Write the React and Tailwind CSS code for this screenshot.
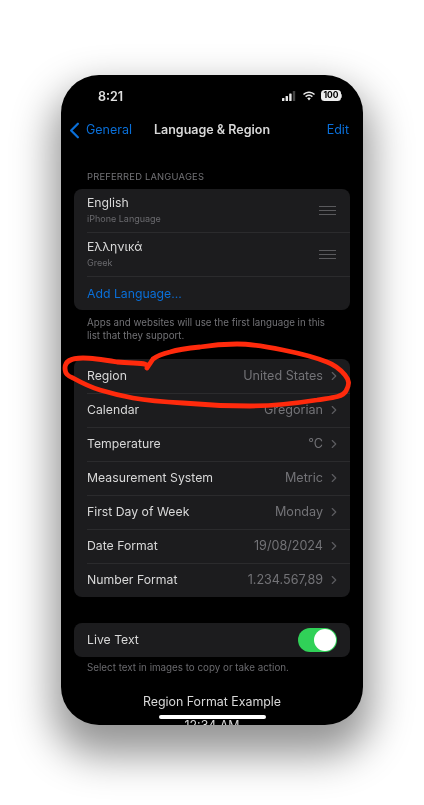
/**
 * App.jsx
 * iPhone settings screen: Language & Region, with a hand-drawn red circle on top.
 */
import { ChevronLeft, ChevronRight } from "lucide-react";

const formatRows = [
  ["Region", "United States"],
  ["Calendar", "Gregorian"],
  ["Temperature", "°C"],
  ["Measurement System", "Metric"],
  ["First Day of Week", "Monday"],
  ["Date Format", "19/08/2024"],
  ["Number Format", "1.234.567,89"],
];

const languages = [
  ["English", "iPhone Language"],
  ["Ελληνικά", "Greek"],
];

const StatusIcons = () => (
  <div className="flex items-center">
    {/* Signal */}
    <svg width="14" height="10" viewBox="0 0 14 10" className="mr-[6px] text-[#e8e8e8]">
      <rect x="0" y="7" width="2.4" height="3" rx="0.6" fill="currentColor" />
      <rect x="3.6" y="5" width="2.4" height="5" rx="0.6" fill="currentColor" />
      <rect x="7.2" y="2.5" width="2.4" height="7.5" rx="0.6" fill="currentColor" />
      <rect x="10.8" y="0" width="2.4" height="10" rx="0.6" fill="#444" />
    </svg>
    {/* Wifi */}
    <svg width="14" height="10" viewBox="0 0 14 10" fill="#e8e8e8" className="mr-[5px]">
      <path d="M7 2.100c1.900 0 3.700.7 5 2l1-1.100C11.400 1.300 9.300.4 7 .4S2.600 1.300 1 3l1 1.100c1.300-1.300 3.100-2 5-2z" />
      <path d="M7 5.100c1.100 0 2.100.4 2.900 1.100l1-1.100C9.800 4.100 8.500 3.500 7 3.500s-2.800.6-3.900 1.600l1 1.100C4.900 5.500 5.900 5.100 7 5.100z" />
      <path d="M7 6.600c-.7 0-1.300.3-1.800.7L7 9.600l1.800-2.300c-.5-.4-1.100-.7-1.800-.7z" />
    </svg>
    {/* Battery */}
    <div className="flex items-center">
      <div className="h-[11px] w-[20px] rounded-[3.5px] bg-[#eeeeee] text-center text-[8.500px] font-bold leading-[11px] text-black">
        100
      </div>
      <div className="h-[4px] w-[1px] rounded-r-sm bg-[#aaaaaa]" />
    </div>
  </div>
);

const DragHandle = () => (
  <div className="flex flex-col gap-[2.500px]">
    <div className="h-[1.500px] w-[17px] bg-[#5a5a5d]" />
    <div className="h-[1.500px] w-[17px] bg-[#5a5a5d]" />
    <div className="h-[1.500px] w-[17px] bg-[#5a5a5d]" />
  </div>
);

const App = () => {
  return (
    <div className="relative h-[805px] w-[424px] overflow-hidden bg-white pl-[61px] pt-[75px] font-['Inter','Liberation_Sans',sans-serif]">
      {/* Phone */}
      <div className="relative h-[650px] w-[302px] overflow-hidden rounded-[38px] bg-black text-[#d8d8d8] shadow-[0_22px_40px_8px_rgba(0,0,0,0.42)] blur-[0.3px]">
        {/* Status bar */}
        <div className="flex h-[43px] items-center justify-between pl-[37px] pr-[21px]">
          <span className="pt-[2px] text-[12.500px] font-semibold text-[#e0e0e0]">8:21</span>
          <div className="pb-[2px]">
            <StatusIcons />
          </div>
        </div>

        {/* Nav bar */}
        <div className="relative flex h-[24px] items-center justify-between pr-[14px] text-[12.500px]">
          <div className="flex items-center text-[#0a6fd8]">
            <ChevronLeft size={27} strokeWidth={2} />
            <span className="-ml-[2px]">General</span>
          </div>
          <span className="absolute left-0 right-0 text-center font-semibold text-[#d8d8d8]">Language &amp; Region</span>
          <span className="text-[#0a6fd8]">Edit</span>
        </div>

        {/* Preferred languages */}
        <div className="mt-[29px] pl-[26px] text-[9.400px] leading-[12px] tracking-[0.2px] text-[#727276]">
          PREFERRED LANGUAGES
        </div>
        <div className="mx-[13px] mt-[6px] rounded-[8px] bg-[#1c1c1e] pl-[13px]">
          {languages.map(([name, sub]) => (
            <div key={name} className="flex h-[44px] items-center justify-between border-b border-[#2b2b2d] pr-[14px]">
              <div className="pb-[1px]">
                <div className="text-[12.250px] leading-[16px]">{name}</div>
                <div className="mt-[2px] text-[9px] leading-[12px] text-[#6a6a6e]">{sub}</div>
              </div>
              <DragHandle />
            </div>
          ))}
          <div className="flex h-[33px] items-center pt-[1px] text-[12.250px] text-[#0a6fd8]">Add Language...</div>
        </div>
        <p className="ml-[26px] mr-[10px] mt-[6px] text-[9.750px] leading-[13px] text-[#727276]">
          Apps and websites will use the first language in this
          <br />
          list that they support.
        </p>

        {/* Format settings */}
        <div className="mx-[13px] mt-[17px] rounded-[8px] bg-[#1c1c1e] pl-[13px] pt-[1px]">
          {formatRows.map(([label, value], i) => (
            <div
              key={label}
              className={`flex items-center justify-between pr-[9px] text-[12.250px] ${i < 6 ? "h-[34px] border-b border-[#2b2b2d]" : "h-[33px]"}`}
            >
              <span>{label}</span>
              <div className="flex items-center gap-[4px] text-[12.600px] text-[#737377]">
                <span>{value}</span>
                <ChevronRight size={14} strokeWidth={2} className="text-[#5c5c60]" />
              </div>
            </div>
          ))}
        </div>

        {/* Live Text */}
        <div className="mx-[13px] mt-[26px] flex h-[34px] items-center justify-between rounded-[8px] bg-[#1c1c1e] pl-[13px] pr-[13px] text-[12.250px]">
          <span>Live Text</span>
          <div className="flex h-[24px] w-[39px] items-center justify-end rounded-full bg-[#30d158] pr-[1px]">
            <div className="h-[22px] w-[22px] rounded-full bg-white" />
          </div>
        </div>
        <p className="ml-[26px] mr-[10px] mt-[4px] text-[9.800px] leading-[13px] text-[#6a6a6e]">
          Select text in images to copy or take action.
        </p>

        {/* Example, cut off by the screen edge */}
        <div className="mt-[19px] text-center text-[12.400px] leading-[18px] text-[#d8d8d8]">Region Format Example</div>
        <div className="mt-[8px] text-center text-[12.400px] leading-[14px] text-[#d8d8d8]">12:34 AM</div>

        {/* Home indicator */}
        <div className="absolute bottom-[6px] left-[98px] h-[4px] w-[107px] rounded-full bg-white" />
      </div>

      {/* Red scribble */}
      <svg width="424" height="805" className="absolute left-0 top-0" fill="none">
        <path
          d="M147 368 C149 362 140 364 117 362 C105 360 92 358 83 358 C72 358 65 361 65 368 C65 374 68 376 73 378 C82 383 90 387 100 390 C110 393 122 396 133 398 C150 401 165 402 183 403 C205 405 228 406 250 406 C275 406 298 403 317 400 C328 398 342 398 346 391 C350 384 349 380 345 375 C340 369 335 365 327 362 C312 356 298 353 283 350 C268 347 252 344 237 344 C222 344 212 345 200 347 C190 348 180 349 170 352 C162 354 157 356 153 359 C151 362 149 365 147 368"
          stroke="#ff2a0c"
          strokeWidth="4.800"
          strokeLinecap="round"
          strokeLinejoin="round"
        />
      </svg>
    </div>
  );
};

export default App;
